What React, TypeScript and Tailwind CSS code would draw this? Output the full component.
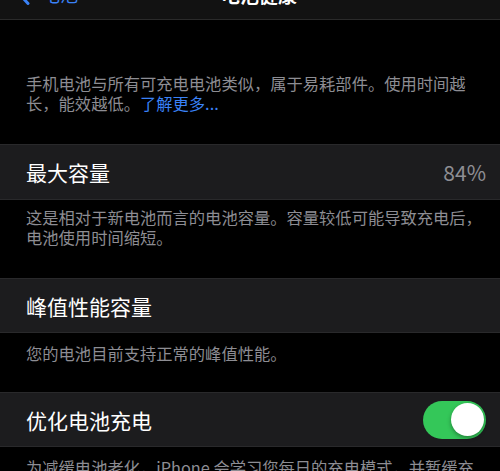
import React from 'react';

const Toggle: React.FC<{ on: boolean }> = ({ on }) => (
  <div
    className={`flex h-[38px] w-[63px] items-center rounded-full p-[2.5px] ${
      on ? 'justify-end bg-[#34c759]' : 'justify-start bg-[#39393d]'
    }`}
  >
    <div className="h-[33px] w-[33px] rounded-full bg-white shadow-[0_2px_4px_rgba(0,0,0,0.35)]" />
  </div>
);

const Cell: React.FC<{ title: string; children?: React.ReactNode; tall?: boolean }> = ({ title, children, tall }) => (
  <div
    className={`flex items-center justify-between border-y border-[#29292b] bg-[#1c1c1e] pl-[26px] pr-[14px] ${
      tall ? 'h-[56px]' : 'h-[55px]'
    }`}
  >
    <span className="text-[21px] leading-[26px] text-white">{title}</span>
    {children}
  </div>
);

const Footer: React.FC<{ className?: string; children: React.ReactNode }> = ({ className, children }) => (
  <p className={`pl-[26px] pr-[16px] text-[16.3px] leading-[20px] text-[#8d8d93] ${className ?? ''}`}>{children}</p>
);

const App: React.FC = () => {
  return (
    <div
      className="h-[471px] w-[500px] overflow-hidden bg-black"
      style={{ fontFamily: '"Noto Sans CJK SC", "Noto Sans", sans-serif' }}
    >
      {/* Navigation bar, scrolled mostly out of view */}
      <div className="relative h-[20px] overflow-hidden border-b border-[#2a2a2a] bg-[#121212]">
        <div className="absolute left-[18px] top-[-16px] flex h-[21px] items-center gap-[12px] text-[#3a82f7]">
          <svg width="12" height="21" viewBox="0 0 12 21" fill="none">
            <path d="M10 1.5 1.8 10.5 10 19.5" stroke="currentColor" strokeWidth="3" strokeLinecap="round" strokeLinejoin="round" />
          </svg>
          <span className="text-[18px] leading-[21px]">电池</span>
        </div>
        <div className="absolute left-[221px] top-[-16px] h-[21px] text-[19px] font-semibold leading-[21px] text-white">
          电池健康
        </div>
      </div>

      <Footer className="mt-[53px]">
        手机电池与所有可充电电池类似，属于易耗部件。使用时间越长，能效越低。
        <span className="text-[#3a82f7]">了解更多...</span>
      </Footer>

      <div className="mt-[31px]">
        <Cell title="最大容量" tall>
          <span className="text-[21px] leading-[26px] text-[#8e8e93]">84%</span>
        </Cell>
        <Footer className="mt-[7px]">
          这是相对于新电池而言的电池容量。容量较低可能导致充电后，电池使用时间缩短。
        </Footer>
      </div>

      <div className="mt-[31px]">
        <Cell title="峰值性能容量" />
        <Footer className="mt-[10px]">您的电池目前支持正常的峰值性能。</Footer>
      </div>

      <div className="mt-[29px]">
        <Cell title="优化电池充电">
          <Toggle on />
        </Cell>
        <Footer className="mt-[10px]">
          为减缓电池老化，iPhone 会学习您每日的充电模式，并暂缓充电至 80% 以上，直到您需要使用 iPhone 时。
        </Footer>
      </div>
    </div>
  );
};

export default App;
